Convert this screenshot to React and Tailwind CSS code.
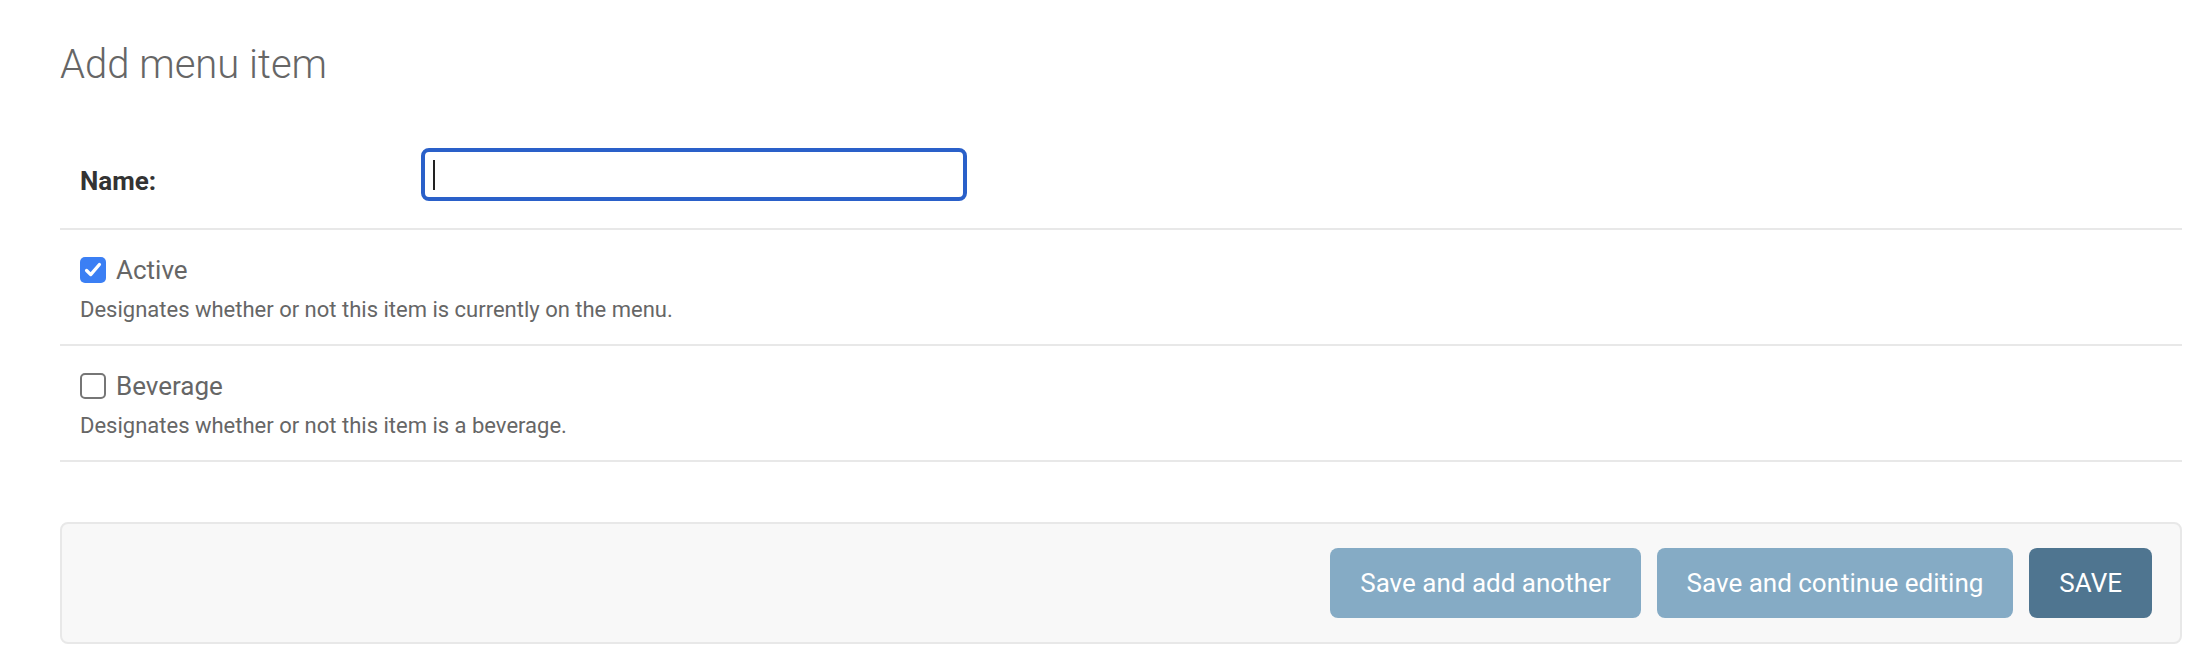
import React from 'react';

const Checkbox = ({ checked }) => (
    checked ? (
        <span className="w-[26px] h-[26px] rounded-[5px] bg-[#3b7ff4] flex items-center justify-center shrink-0">
            <svg viewBox="0 0 24 24" className="w-[22px] h-[22px]" fill="none" stroke="white" strokeWidth="3.6" strokeLinecap="round" strokeLinejoin="round">
                <path d="M5 12.5l4.5 4.5L19 6" />
            </svg>
        </span>
    ) : (
        <span className="w-[26px] h-[26px] rounded-[5px] border-2 border-[#767676] bg-white shrink-0" />
    )
);

const CheckboxRow = ({ label, help, checked }) => (
    <div className="pt-[20px] pb-[20px] pl-[20px] border-b-2 border-[#e8e8e8]">
        <div className="h-[40px] flex items-center gap-[10px]">
            <Checkbox checked={checked} />
            <span className="text-[26px] leading-[32px] text-[#666]">{label}</span>
        </div>
        <div className="mt-[6px] text-[22px] leading-[28px] text-[#666]">{help}</div>
    </div>
);

const App = () => {
    const buttons = ['Save and add another', 'Save and continue editing'];

    return (
        <div className="min-h-[654px] bg-white pl-[60px] pr-[8px] pt-[41px] font-['Roboto',_'Liberation_Sans',_sans-serif]">
            <h1 className="text-[40px] leading-[48px] font-light text-[#666]">Add menu item</h1>

            <div className="mt-[39px]">
                {/* Name */}
                <div className="flex items-start pt-[20px] pb-[27px] pl-[20px] border-b-2 border-[#e8e8e8]">
                    <label className="w-[341px] shrink-0 pt-[17px] text-[26px] leading-[32px] font-bold text-[#333]">Name:</label>
                    <div className="w-[546px] h-[53px] rounded-[8px] border-4 border-[#2a60c9] bg-white flex items-center">
                        <span className="ml-[8px] w-[2px] h-[30px] bg-[#222]" />
                    </div>
                </div>

                <CheckboxRow checked label="Active" help="Designates whether or not this item is currently on the menu." />
                <CheckboxRow label="Beverage" help="Designates whether or not this item is a beverage." />
            </div>

            <div className="mt-[60px] border-2 border-[#e8e8e8] rounded-[8px] bg-[#f8f8f8] pt-[24px] pb-[24px] pr-[28px] flex justify-end gap-[16px]">
                {buttons.map(b => (
                    <button key={b} className="h-[70px] px-[30px] rounded-[8px] bg-[#85abc5] text-white text-[26px] leading-[32px]">{b}</button>
                ))}
                <button className="h-[70px] px-[30px] rounded-[8px] bg-[#4f7590] text-white text-[26px] leading-[32px]">SAVE</button>
            </div>
        </div>
    );
};

export default App;
